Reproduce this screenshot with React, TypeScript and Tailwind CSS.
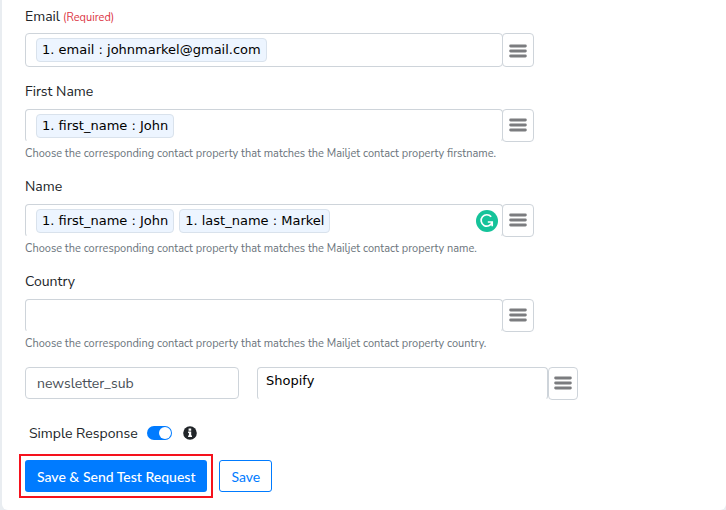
import React from 'react';

const editorBox =
  'flex h-full min-w-0 grow items-center gap-[5px] rounded border border-[#ced4da] bg-white pl-[10px]';
const chipFont = 'font-["DejaVu_Sans",Verdana,sans-serif] text-[13px]';

function MenuButton({ label, className = 'w-8 pt-2' }: { label: string; className?: string }) {
  return (
    <button
      type="button"
      aria-label={label}
      className={`${className} flex h-full shrink-0 justify-center rounded border border-[#ced4da] bg-white`}
    >
      <svg width="18" height="14" viewBox="0 0 18 14" fill="none" stroke="#7b7c7f" strokeWidth="2.8" strokeLinecap="round">
        <path d="M1.6 2h14.8M1.6 7h14.8M1.6 12h14.8" />
      </svg>
    </button>
  );
}

function Chip({ children }: { children: React.ReactNode }) {
  return (
    <span className={`${chipFont} h-6 shrink-0 rounded border border-[#d9e2ec] bg-[#edf5ff] px-[5px] leading-[22px] whitespace-nowrap text-black`}>
      {children}
    </span>
  );
}

function GrammarBadge() {
  return (
    <svg className="mr-1 shrink-0" width="22" height="22" viewBox="0 0 22 22" fill="none" aria-hidden="true">
      <circle cx="11" cy="11" r="11" fill="#15c39a" />
      <path d="M15.2 6.8A5.7 5.7 0 1 0 16.2 12.4" stroke="#fff" strokeWidth="1.7" />
      <path d="M11.8 12h4.4v4.2" stroke="#fff" strokeWidth="1.7" />
    </svg>
  );
}

interface FieldProps {
  id: string;
  label: string;
  required?: boolean;
  chips?: string[];
  help?: string;
  badge?: boolean;
}

function Field({ id, label, required, chips = [], help, badge }: FieldProps) {
  return (
    <div className={required ? 'mb-[15px]' : 'mb-[13px]'}>
      <label htmlFor={id} className="block h-5 text-[14px] leading-5 text-[#212529]">
        {label}
        {required && <span className="ml-[3px] text-[11px] text-[#dc3545]">(Required)</span>}
      </label>
      <div className={required ? 'mt-[6px] flex h-[34px] max-w-[509px]' : 'mt-[7px] flex h-[33px] max-w-[509px]'}>
        <div className={required ? editorBox : `${editorBox} border-b-transparent`}>
          {chips.map((chip) => (
            <Chip key={chip}>{chip}</Chip>
          ))}
          <input id={id} type="text" className={`${chipFont} h-full min-w-0 grow bg-transparent outline-none`} />
          {badge && <GrammarBadge />}
        </div>
        <div className="-ml-px flex">
          <MenuButton label={`Map ${label}`} className={required ? 'w-8 pt-[10px]' : 'w-8 pt-2'} />
        </div>
      </div>
      {help && <p className="mt-px h-[21px] text-[11px] leading-[21px] whitespace-nowrap text-[#6c757d]">{help}</p>}
    </div>
  );
}

export default function App() {
  return (
    <div className="min-h-screen bg-[#e9edf1] pl-[2px] font-['Nunito_Sans',Lato,sans-serif]">
      <form className="min-h-screen rounded-b-md bg-white pt-[7px] pl-[23px]" onSubmit={(e) => e.preventDefault()}>
        <Field id="email" label="Email" required chips={['1. email : johnmarkel@gmail.com']} />
        <Field
          id="first-name"
          label="First Name"
          chips={['1. first_name : John']}
          help="Choose the corresponding contact property that matches the Mailjet contact property firstname."
        />
        <Field
          id="name"
          label="Name"
          chips={['1. first_name : John', '1. last_name : Markel']}
          badge
          help="Choose the corresponding contact property that matches the Mailjet contact property name."
        />
        <Field
          id="country"
          label="Country"
          help="Choose the corresponding contact property that matches the Mailjet contact property country."
        />
        <div className="flex max-w-[553px] items-start">
          <input
            type="text"
            aria-label="Property name"
            defaultValue="newsletter_sub"
            className="h-8 w-[214px] shrink-0 rounded border border-[#ced4da] px-[11px] text-[14px] text-[#495057]"
          />
          <div className="ml-[18px] flex h-[33px] min-w-0 grow">
            <textarea
              aria-label="Property value"
              defaultValue="Shopify"
              className={`${chipFont} h-full min-w-0 grow resize-none overflow-hidden rounded border border-[#ced4da] border-b-transparent px-2 pt-[5px] leading-4 text-black`}
            />
            <MenuButton label="Map property value" className="w-[30px] pt-2" />
          </div>
        </div>
        <div className="mt-[23px] ml-1 flex h-5 items-center text-[14px] text-[#212529]">
          <label htmlFor="simple">Simple Response</label>
          <input
            id="simple"
            type="checkbox"
            role="switch"
            defaultChecked
            className="ml-[9px] h-[14px] w-[25px] appearance-none rounded-full bg-[#adb5bd] p-px before:block before:size-3 before:rounded-full before:bg-white checked:bg-[#007bff] checked:before:ml-auto"
          />
          <svg className="ml-[11px]" width="14" height="14" viewBox="0 0 14 14" role="img" aria-label="Info">
            <circle cx="7" cy="7" r="6.8" fill="#212529" />
            <path d="M5.6 2.5h2.6v2.2H5.6zM5.1 5.6h3.1v4h.8v1.4H5.1V9.6h.8V7h-.8z" fill="#fff" />
          </svg>
        </div>
        <div className="mt-[17px] flex gap-3 font-[Lato,sans-serif] text-[14px]">
          <div className="flex outline-2 outline-offset-4 outline-[#f5121d]">
            <button type="submit" className="h-8 rounded-[3px] bg-[#007bff] px-3 font-medium text-white">
              Save &amp; Send Test Request
            </button>
          </div>
          <button type="button" className="h-8 rounded-[3px] border border-[#007bff] bg-white px-[11px] text-[#007bff]">
            Save
          </button>
        </div>
      </form>
    </div>
  );
}
